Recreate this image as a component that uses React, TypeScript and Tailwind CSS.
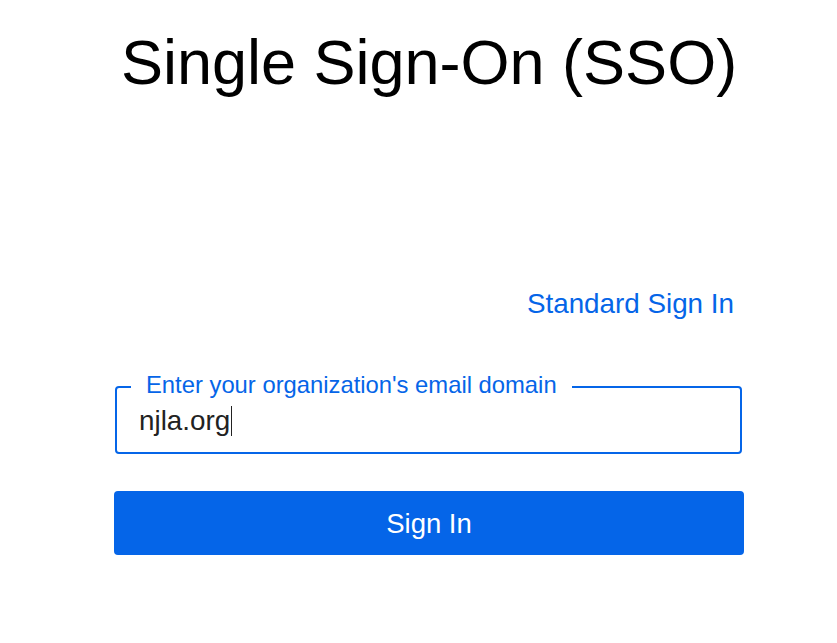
import React from "react";

export default function App() {
  return (
    <div className="w-[837px] h-[643px] bg-white font-['Liberation_Sans',Arial,sans-serif]">
      <div className="ml-[114px] w-[630px] pt-[26px] flex flex-col">
        <h1 className="text-center text-[63px] leading-[72px] text-black font-normal">
          Single Sign-On (SSO)
        </h1>
        <div className="mt-[190px] flex justify-end pr-[10px]">
          <a className="text-[27.8px] leading-[31px] text-[#0565e8] cursor-pointer">
            Standard Sign In
          </a>
        </div>
        <fieldset className="mt-[52px] ml-[1px] mr-[2px] border-2 border-[#0565e8] rounded-[4px] px-0 pb-[16px] m-0 min-w-0">
          <legend className="ml-[14px] px-[15px] pb-[5px] text-[23.8px] leading-[27px] text-[#0565e8]">
            Enter your organization's email domain
          </legend>
          <div className="pt-[2px] pl-[22px] flex items-center h-[33px] text-[27.8px] leading-[31px] text-[#222222]">
            <span>njla.org</span>
            <span className="ml-[1px] w-[1px] h-[30px] bg-[#222222]" />
          </div>
        </fieldset>
        <button className="mt-[37px] h-[64px] w-full rounded-[4px] bg-[#0565e8] text-white text-[27.5px] leading-[31px]">
          Sign In
        </button>
      </div>
    </div>
  );
}
